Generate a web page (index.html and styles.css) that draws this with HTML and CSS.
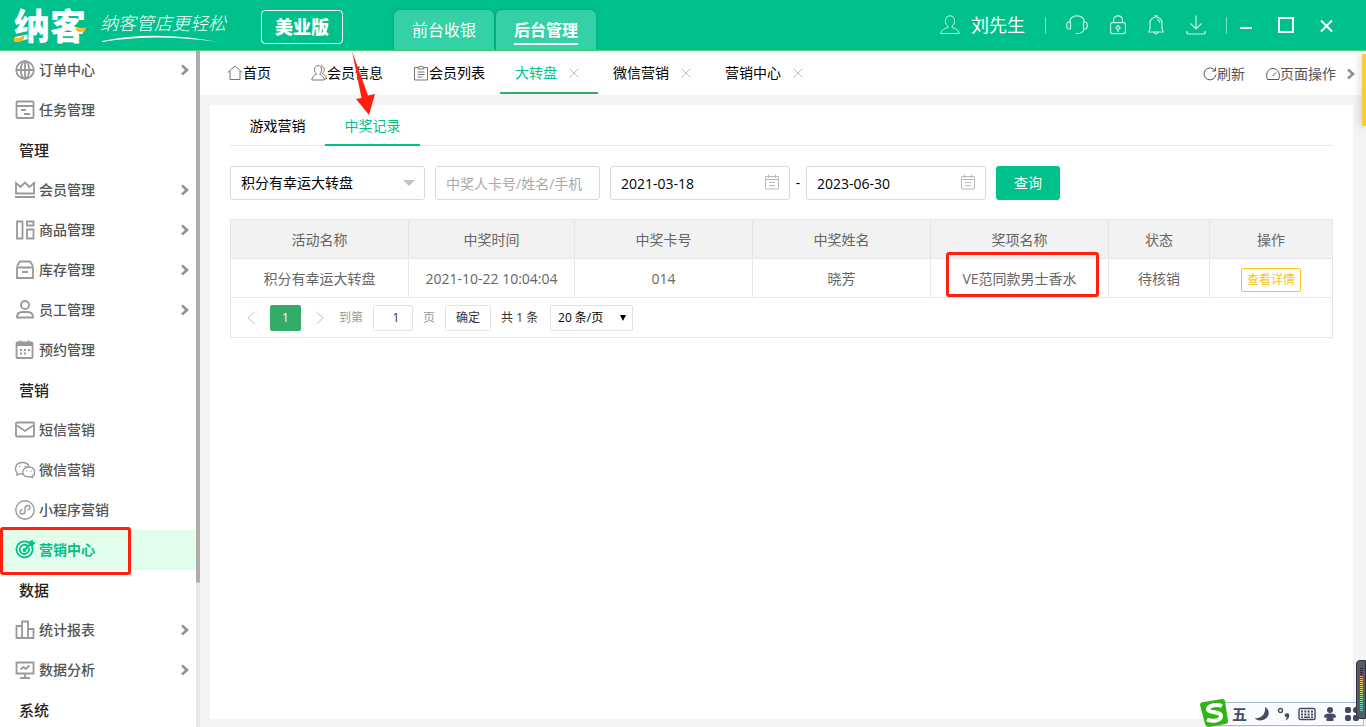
FILE: index.html
```html
<!DOCTYPE html>
<html lang="zh-CN">
<head>
    <meta charset="UTF-8">
    <meta name="viewport" content="width=device-width, initial-scale=1.0">
    <title>纳客 - 大转盘</title>
    <link rel="stylesheet" href="styles.css">
</head>
<body>

    <!-- 图标 -->
    <svg class="sprite" aria-hidden="true">
        <symbol id="i-right" viewBox="0 0 10 12"><path d="M2 1.500 7 6 2 10.500" stroke-width="2.600"/></symbol>
        <symbol id="i-close" viewBox="0 0 14 14"><path d="M2.500 2.500l9 9M11.500 2.500l-9 9"/></symbol>
        <symbol id="i-date" viewBox="0 0 16 16"><path d="M1.500 2.500h13v12.500h-13zM1.500 5.500h13M4.500 .5v3.500M11.500 .5v3.500M5 8.500h6M5 11.500h6"/></symbol>
    </svg>

    <header class="header">
        <div class="logo">纳客
            <svg class="logo-mark" viewBox="0 0 72 32"><path d="M0 26c4 1 7-1 10-3l0 4c-3 3-6 3-10 3zM62 15c3 2 6 2 10 0l-1 4c-4 2-7 1-9-1z"/></svg>
        </div>
        <div class="slogan">
            <span>纳客管店更轻松</span>
            <svg viewBox="0 0 120 8"><path d="M2 6Q55-5 118 7Q55-2 2 7z"/></svg>
        </div>
        <button type="button" class="edition">美业版</button>
        <nav class="modes">
            <a href="#">前台收银</a>
            <a href="#" class="on"><span>后台管理</span></a>
        </nav>
        <div class="header-right">
            <a href="#" class="user">
                <svg width="20" height="20" viewBox="0 0 20 20"><path d="M10 .8c-3 0-4.600 2.200-4.600 5 0 2.400 1 4.400 2.600 5.400v1.300c-3.500.8-6.800 2.500-7.300 6h18.600c-.5-3.500-3.800-5.200-7.300-6v-1.300c1.600-1 2.600-3 2.600-5.400 0-2.800-1.600-5-4.600-5z"/></svg>
                刘先生
            </a>
            <i class="line"></i>
            <div class="tools">
                <button type="button" aria-label="客服"><svg width="22" height="20" viewBox="0 0 22 20"><path d="M3.500 7C4 3 7 .8 11 .8S18 3 18.500 7M4.500 7v7H3C1.500 14 .7 12.500.7 10.500S1.500 7 3 7zM17.500 7v7H19c1.500 0 2.300-1.500 2.300-3.500S20.500 7 19 7zM18 14c-.5 2.500-2.500 4.300-5.500 4.500H9.500"/></svg></button>
                <button type="button" aria-label="锁屏"><svg width="16" height="20" viewBox="0 0 16 20"><path d="M3.500 7.500V5.500C3.500 2.500 5.500.8 8 .8s4.500 1.700 4.500 4.700V7.500M2.500 7.700h11q2 0 2 2v7q0 2-2 2h-11q-2 0-2-2v-7q0-2 2-2zM8 10.500l2.200 2.200L8 15l-2.200-2.300zM8 15v2"/></svg></button>
                <button type="button" aria-label="通知"><svg width="16" height="20" viewBox="0 0 16 20"><path d="M8 2C4.500 2 2 4.800 2 8v5.500L.8 17h14.400L14 13.500V8c0-3.200-2.500-6-6-6zM7 2V.8h2V2M6 17.200c.5 2.200 3.500 2.200 4 0M9 4.500c1.800.4 2.700 1.800 2.800 3.500"/></svg></button>
                <button type="button" aria-label="下载"><svg width="20" height="20" viewBox="0 0 20 20"><path d="M10 .5V14M4.500 8.500 10 14l5.500-5.500M.8 16v1q0 2 2 2h14.400q2 0 2-2v-1"/></svg></button>
            </div>
            <i class="line"></i>
            <div class="window">
                <button type="button" aria-label="最小化"><svg width="12" height="16" viewBox="0 0 12 16"><path d="M0 11h12"/></svg></button>
                <button type="button" aria-label="最大化"><svg width="16" height="16" viewBox="0 0 16 16"><path d="M1 1h14v14H1z"/></svg></button>
                <button type="button" aria-label="关闭"><svg width="13" height="16" viewBox="0 0 13 16"><path d="M1 3.500l11 11M12 3.500l-11 11"/></svg></button>
            </div>
        </div>
    </header>

    <div class="body">
        <aside class="sidebar">
            <nav class="menu">
                <a href="#"><svg class="icon" viewBox="0 0 20 20"><circle cx="10" cy="10" r="8.800"/><ellipse cx="10" cy="10" rx="4.200" ry="8.800"/><path d="M10 1v18M1 10h18"/></svg>订单中心<svg class="arrow"><use href="#i-right"/></svg></a>
                <a href="#"><svg class="icon" viewBox="0 0 20 20"><rect x="1.500" y="1.500" width="17" height="16.500" rx="1"/><path d="M2 6h16M6 10h5M9 14h6"/></svg>任务管理</a>
                <h3>管理</h3>
                <a href="#"><svg class="icon" viewBox="0 0 20 20"><path d="M1 3v10.500h18V3l-4.500 4L10 2.500 5.500 7zM0 17h20"/></svg>会员管理<svg class="arrow"><use href="#i-right"/></svg></a>
                <a href="#"><svg class="icon" viewBox="0 0 20 20"><path d="M2 1.500h5.500v17H2zM12 1.500h6.500v4H12zM12 9.500h6.500v9H12z"/></svg>商品管理<svg class="arrow"><use href="#i-right"/></svg></a>
                <a href="#"><svg class="icon" viewBox="0 0 20 20"><path d="M2 6 5 1.500h10L18 6M2 7.500V18h16V7.500zM7 12h6"/></svg>库存管理<svg class="arrow"><use href="#i-right"/></svg></a>
                <a href="#"><svg class="icon" viewBox="0 0 20 20"><circle cx="10" cy="5" r="4"/><path d="M2 17.500c0-4 2.500-5.500 5.500-5.500h5c3 0 5.500 1.500 5.500 5.500z"/></svg>员工管理<svg class="arrow"><use href="#i-right"/></svg></a>
                <a href="#"><svg class="icon" viewBox="0 0 20 20"><rect x="1.500" y="2.500" width="16" height="15.500" rx="1"/><path d="M2 4.500h15" stroke-width="3"/><path d="M5.500.5v4M13.500.5v4M5 10h2M9 10h2M13 10h2M5 13.500h2M9 13.500h2"/></svg>预约管理</a>
                <h3>营销</h3>
                <a href="#"><svg class="icon" viewBox="0 0 20 20"><rect x="1" y="2.500" width="18" height="14" rx="1"/><path d="M2 5.500 10 11l8-5.500"/></svg>短信营销</a>
                <a href="#"><svg class="icon thin" viewBox="0 0 20 20"><path d="M8 14c-1.500.2-2.500 0-3.500-.3L2 15v-2.500C-1 9 .5 2.500 7.500 2.500c3.500 0 6 1.700 6.500 4.500M13.700 7c7 0 7 7.500 3.800 9v1.500l-2-.8C5 18.500 6 7 13.700 7zM5 6v1M10 6v1M11.500 10.500v1M16 10.500v1"/></svg>微信营销</a>
                <a href="#"><svg class="icon thin" viewBox="0 0 20 20"><circle cx="10" cy="10" r="9.200"/><path d="M7.500 9.500c-3 .5-3.500 4.500-.5 4.500 2 0 3-1 3-2.500V8.500C10 7 11 5.500 13 5.500c3 0 2.500 4-.5 4.500"/></svg>小程序营销</a>
                <a href="#" class="active"><svg class="icon" viewBox="0 0 20 20"><path d="M15 3.500a8 8 0 1 0 1.800 2.500M12.500 6a4.600 4.600 0 1 0 1.200 1.800M9.500 10 17 2.500M15 5V2.500L17 1v2h2l-1.500 2z"/><circle cx="9.500" cy="10" r="1"/></svg>营销中心</a>
                <h3>数据</h3>
                <a href="#"><svg class="icon" viewBox="0 0 20 20"><path d="M1.500 6h5.500v12H1.500zM7 1.500h6V18H7zM13 9h5.500v9H13z"/></svg>统计报表<svg class="arrow"><use href="#i-right"/></svg></a>
                <a href="#"><svg class="icon" viewBox="0 0 20 20"><path d="M1.500 2.500h17v11h-17zM10 13.500V18M5 18h10M5.500 9.500l3-2.500 2.500 2 3.500-3.500"/></svg>数据分析<svg class="arrow"><use href="#i-right"/></svg></a>
                <h3>系统</h3>
            </nav>
            <div class="scroll"><div class="thumb"></div></div>
            <div class="mark mark-menu"></div>
        </aside>

        <main class="main">
            <div class="tabbar">
                <a href="#" class="home"><svg width="16" height="16" viewBox="0 0 16 16"><path d="M.7 7.500 8 1l7.300 6.500M3 6v8.500h10V6"/></svg>首页</a>
                <a href="#"><svg width="16" height="16" viewBox="0 0 16 16"><path d="M7 .7c-2.300 0-3.500 1.700-3.500 3.800S4.500 8.300 5.500 9C3 10.500.8 12 .8 15h12.500c0-3-2.200-4.500-4.700-6 1-.7 2-2.400 2-4.500S9.500.7 7 .7zM10 1c3.500 0 4.500 5 1.500 7.500 2.500 1.500 4 3 4 5.500h-2"/></svg>会员信息</a>
                <a href="#"><svg width="16" height="16" viewBox="0 0 16 16"><path d="M4.500 2.500h-3v12.500h13V2.500h-3M5 4V2h2q1-2.500 2 0h2v2zM4.500 7h7M4.500 9.500h7M4.500 12h5"/></svg>会员列表</a>
                <a href="#" class="closable current">大转盘<svg class="x"><use href="#i-close"/></svg></a>
                <a href="#" class="closable">微信营销<svg class="x"><use href="#i-close"/></svg></a>
                <a href="#" class="closable">营销中心<svg class="x"><use href="#i-close"/></svg></a>
                <div class="tabbar-right">
                    <button type="button"><svg width="14" height="14" viewBox="0 0 14 14"><path d="M12 3.500A6 6 0 1 0 13 7.500M12.500.5v3.500H9"/></svg>刷新</button>
                    <button type="button"><svg width="14" height="14" viewBox="0 0 14 14"><path d="M1.500 12.500C-1 7 2 1.500 7 1.500s8 5.500 5.500 11zM6.500 9 10 5.500"/></svg>页面操作</button>
                    <button type="button" aria-label="更多"><svg class="arrow"><use href="#i-right"/></svg></button>
                </div>
            </div>

            <section class="card">
                <div class="subtabs">
                    <a href="#">游戏营销</a>
                    <a href="#" class="current">中奖记录</a>
                    <svg class="pointer" viewBox="0 0 27 64"><path d="M2 0 18 44.500 25 43 19 64 6 48 11.500 47z"/></svg>
                </div>

                <form class="search">
                    <div class="select">
                        <select aria-label="活动">
                            <option>积分有幸运大转盘</option>
                        </select>
                        <i class="caret"></i>
                    </div>
                    <input class="keyword" type="text" placeholder="中奖人卡号/姓名/手机" aria-label="中奖人卡号/姓名/手机">
                    <div class="range">
                        <div class="date"><input type="text" value="2021-03-18" aria-label="开始日期"><svg><use href="#i-date"/></svg></div>
                        <span>-</span>
                        <div class="date"><input type="text" value="2023-06-30" aria-label="结束日期"><svg><use href="#i-date"/></svg></div>
                    </div>
                    <button type="button">查询</button>
                </form>

                <div class="list">
                    <table>
                        <thead>
                            <tr>
                                <th class="w-name">活动名称</th>
                                <th class="w-time">中奖时间</th>
                                <th class="w-name">中奖卡号</th>
                                <th class="w-name">中奖姓名</th>
                                <th class="w-name">奖项名称</th>
                                <th class="w-state">状态</th>
                                <th>操作</th>
                            </tr>
                        </thead>
                        <tbody>
                            <tr>
                                <td>积分有幸运大转盘</td>
                                <td>2021-10-22 10:04:04</td>
                                <td>014</td>
                                <td>晓芳</td>
                                <td class="prize">VE范同款男士香水<div class="mark mark-prize"></div></td>
                                <td>待核销</td>
                                <td><button type="button" class="detail">查看详情</button></td>
                            </tr>
                        </tbody>
                    </table>
                    <div class="pager">
                        <button type="button" class="turn" aria-label="上一页"><svg width="8" height="14" viewBox="0 0 8 14"><path d="M7.500 1 1 7l6.500 6"/></svg></button>
                        <button type="button" class="page">1</button>
                        <button type="button" class="turn" aria-label="下一页"><svg width="8" height="14" viewBox="0 0 8 14"><path d="M.5 1 7 7 .5 13"/></svg></button>
                        <label for="goto">到第</label>
                        <input id="goto" type="text" value="1">
                        <span class="gray">页</span>
                        <button type="button" class="ok">确定</button>
                        <span class="total">共 1 条</span>
                        <div class="size">
                            <select aria-label="每页条数">
                                <option>20 条/页</option>
                            </select>
                            <i></i>
                        </div>
                    </div>
                </div>
            </section>
        </main>
    </div>

    <div class="side-note"></div>

    <!-- 输入法 -->
    <div class="ime">
        <span>五</span>
        <svg width="16" height="16" viewBox="0 0 16 16"><path d="M11 1c5 3 5 9 0 12-4 2.500-9 1.500-10-1 6 1 11-4 10-11z"/></svg>
        <svg width="14" height="16" viewBox="0 0 14 16"><circle cx="3.500" cy="4.500" r="2" class="ring"/><path d="M8 8c3-2 5 0 4 3-.5 2-2 3-4 3.500 1.500-1.500 2-2.500 1.500-3.500C8 11 7 9.500 8 8z"/></svg>
        <svg width="18" height="14" viewBox="0 0 18 14"><path class="ring" d="M2.500 1.500h13q1.500 0 1.500 1.500v8q0 1.500-1.500 1.500h-13Q1 12.500 1 11V3q0-1.500 1.500-1.500z"/><path d="M3 3.500h2v2H3zM6.300 3.500h2v2h-2zM9.600 3.500h2v2h-2zM13 3.500h2v2h-2zM3 6.500h2v2H3zM6.300 6.500h2v2h-2zM9.600 6.500h2v2h-2zM13 6.500h2v2h-2zM3 9.500h2V11H3zM6 9.500h6V11H6zM13 9.500h2V11h-2z"/></svg>
        <svg width="14" height="16" viewBox="0 0 14 16"><circle cx="7" cy="4" r="3"/><path d="M1 11c0-3 3-3.500 6-3.500s6 .5 6 3.500l-1.500 1-1-1v4h-7v-4l-1 1z"/></svg>
        <svg width="16" height="14" viewBox="0 0 16 14"><rect x="1" width="6" height="6" rx="2"/><rect x="9" width="6" height="6" rx="3"/><rect x="1" y="8" width="6" height="6" rx="2"/><rect x="9" y="8" width="6" height="6" rx="2"/></svg>
        <svg class="sogou" viewBox="0 0 28 28"><path class="bg" d="M4 3 22 0q3 0 3 2l3 20q0 3-3 3L9 28q-3 0-4-3L0 6q0-3 4-3z"/><path class="s" d="M22 7C17 5 9 6 8 10c-.5 4.500 13 2 13 7 0 5-9 6-14 3.500"/></svg>
    </div>
    <div class="meter"><i></i></div>

</body>
</html>
```

FILE: styles.css
```css
* {
    box-sizing: border-box;
}
body {
    margin: 0;
    height: 100vh;
    display: flex;
    flex-direction: column;
    overflow: hidden;
    position: relative;
    font-family: "Open Sans", "Noto Sans CJK SC", sans-serif;
    font-size: 14px;
    line-height: 20px;
    color: #000;
    background: #f4f4f4;
}
a {
    color: inherit;
    text-decoration: none;
}
button, input, select {
    font: inherit;
    color: inherit;
    margin: 0;
    padding: 0;
    border: 0;
    background: none;
    outline: none;
}
select {
    appearance: none;
}
svg {
    flex: none;
    fill: none;
    stroke: currentColor;
    stroke-width: 1;
}
.sprite {
    position: absolute;
    width: 0;
    height: 0;
}

/* 顶部 */
.header {
    flex: none;
    display: flex;
    align-items: center;
    height: 50px;
    padding: 0 33px 0 14px;
    background: #00c18b;
    box-shadow: 0 1px 0 #4fd675;
    color: #fff;
    position: relative;
    z-index: 2;
}
.logo {
    position: relative;
    width: 72px;
    padding-top: 4px;
    font-size: 36px;
    line-height: 46px;
    font-weight: 900;
    white-space: nowrap;
}
.logo-mark {
    position: absolute;
    left: 0;
    top: 12px;
    width: 72px;
    height: 32px;
    fill: #fcb813;
    stroke: none;
}
.slogan {
    display: flex;
    flex-direction: column;
    width: 128px;
    margin-left: 14px;
    padding-top: 4px;
    font-size: 18px;
    line-height: 24px;
    font-style: italic;
    font-weight: 300;
    white-space: nowrap;
}
.slogan svg {
    width: 120px;
    height: 8px;
    fill: #fff;
    stroke: none;
}
.edition {
    width: 82px;
    height: 34px;
    margin: 4px 0 0 33px;
    border: 1px solid #fff;
    border-radius: 4px;
    font-size: 18px;
    font-weight: 900;
}
.modes {
    display: flex;
    align-self: flex-end;
    gap: 2px;
    margin-left: 51px;
}
.modes a {
    width: 100px;
    height: 40px;
    border-radius: 6px 6px 0 0;
    background: #33d1a5;
    box-shadow: 0 0 3px rgba(0, 100, 70, 0.4);
    font-size: 16px;
    line-height: 40px;
    text-align: center;
}
.modes .on {
    font-weight: bold;
}
.modes span {
    display: inline-block;
    height: 35px;
    border-bottom: 2px solid #fff;
}
.header-right {
    display: flex;
    align-items: center;
    gap: 20px;
    margin-left: auto;
}
.header-right svg {
    display: block;
}
.user {
    display: flex;
    align-items: center;
    gap: 11px;
    font-size: 18px;
}
.user svg, .tools {
    color: #c4f3e4;
}
.line {
    width: 1px;
    height: 17px;
    background: #80e0c5;
}
.tools {
    display: flex;
    gap: 22px;
}
.tools svg {
    stroke-width: 1.2;
}
.window {
    display: flex;
    gap: 26px;
    margin-left: -7px;
}
.window svg {
    stroke-width: 2;
}

.body {
    flex: 1;
    display: flex;
    min-height: 0;
}

/* 左侧菜单 */
.sidebar {
    position: relative;
    flex: none;
    display: flex;
    width: 200px;
    background: #fff;
}
.menu {
    flex: 1;
    overflow: hidden;
}
.menu a {
    display: flex;
    align-items: center;
    gap: 4px;
    height: 40px;
    padding: 0 6px 0 15px;
    font-weight: 500;
    color: #555;
}
.menu h3 {
    margin: 0;
    padding-left: 19px;
    font-size: 15px;
    line-height: 40px;
    font-weight: 500;
    color: #222;
}
.menu .active {
    background: #e3fdeb;
    color: #00c18b;
    font-weight: bold;
}
.icon {
    width: 20px;
    height: 20px;
    color: #999;
    stroke-width: 1.8;
}
.thin {
    stroke-width: 1.4;
}
.active .icon {
    color: #00c18b;
}
.arrow {
    width: 10px;
    height: 12px;
    margin-left: auto;
    color: #8f8f9c;
}
.scroll {
    width: 4px;
    background: #e8e8e8;
}
.thumb {
    height: 533px;
    border-radius: 0 0 2px 2px;
    background: #adadad;
}
.mark {
    position: absolute;
    border: 3px solid #ff2010;
    border-radius: 3px;
}
.mark-menu {
    left: 0;
    top: 477px;
    width: 131px;
    height: 48px;
}

/* 标签栏 */
.main {
    flex: 1;
    display: flex;
    flex-direction: column;
    min-width: 0;
}
.tabbar {
    flex: none;
    display: flex;
    height: 45px;
    padding: 0 10px 0 12px;
    background: #fff;
}
.tabbar a {
    display: flex;
    align-items: center;
    height: 44px;
    padding: 4px 15px 0;
    border-bottom: 2px solid transparent;
}
.tabbar .home {
    margin-right: 10px;
}
.tabbar a svg {
    color: #777;
}
.tabbar .closable {
    gap: 10px;
    padding-right: 17px;
}
.tabbar .closable .x {
    width: 14px;
    height: 14px;
    color: #bbb;
}
.tabbar .current {
    color: #00c18b;
    border-color: #33ab69;
}
.tabbar-right {
    display: flex;
    align-items: center;
    gap: 21px;
    margin-left: auto;
    padding-top: 3px;
    color: #555;
}
.tabbar-right button {
    display: flex;
    align-items: center;
}
.tabbar-right button:last-child {
    margin-left: -11px;
}

.card {
    flex: 1;
    margin: 10px 13px 8px 10px;
    padding: 0 20px;
    background: #fff;
}
.subtabs {
    position: relative;
    display: flex;
    height: 41px;
    border-bottom: 1px solid #e6e6e6;
}
.subtabs a {
    width: 95px;
    height: 41px;
    line-height: 41px;
    text-align: center;
}
.subtabs .current {
    color: #00c18b;
    border-bottom: 2px solid #00c18b;
}
.pointer {
    position: absolute;
    left: 120px;
    top: -54px;
    width: 27px;
    height: 64px;
    z-index: 3;
    fill: #ff2010;
    stroke: none;
}

/* 查询条件 */
.search {
    display: flex;
    gap: 10px;
    margin: 20px 0 19px;
}
.search input, .search select {
    width: 100%;
    height: 34px;
    padding: 0 10px;
    border: 1px solid #d9d9d9;
    border-radius: 3px;
    background: #fff;
}
.select {
    position: relative;
    width: 195px;
}
.caret {
    position: absolute;
    right: 10px;
    top: 14px;
    border: 6px solid transparent;
    border-top-color: #c2c2c2;
    border-bottom: 0;
}
.search .keyword {
    width: 165px;
}
.keyword::placeholder {
    color: #aaa;
}
.range {
    display: flex;
    align-items: center;
}
.range span {
    width: 16px;
    text-align: center;
}
.date {
    position: relative;
    width: 180px;
}
.date svg {
    position: absolute;
    right: 10px;
    top: 8px;
    width: 16px;
    height: 16px;
    color: #bbb;
}
.search button {
    width: 64px;
    height: 34px;
    border-radius: 3px;
    background: #00c18b;
    color: #fff;
}

/* 列表 */
.list {
    border: 1px solid #e6e6e6;
    color: #666;
}
table {
    width: 100%;
    table-layout: fixed;
    border-spacing: 0;
}
th, td {
    height: 39px;
    padding: 2px 0 0;
    border-right: 1px solid #e6e6e6;
    border-bottom: 1px solid #e6e6e6;
    font-weight: normal;
    text-align: center;
}
th:last-child, td:last-child {
    border-right: 0;
}
th {
    background: #f2f2f2;
}
.w-name {
    width: 178px;
}
.w-time {
    width: 166px;
}
.w-state {
    width: 101px;
}
.prize {
    position: relative;
}
.mark-prize {
    left: 15px;
    top: -7px;
    width: 153px;
    height: 45px;
}
.detail {
    display: block;
    width: 60px;
    height: 24px;
    margin: 2px auto 0;
    border: 1px solid #fcc30a;
    border-radius: 2px;
    font-size: 12px;
    line-height: 22px;
    color: #fcc30a;
}
.pager {
    display: flex;
    align-items: center;
    gap: 10px;
    height: 39px;
    padding-left: 11px;
    font-size: 12px;
    color: #333;
}
.pager .turn {
    width: 18px;
    color: #c2c2c2;
}
.turn svg {
    display: block;
    margin: auto;
}
.pager .page {
    width: 31px;
    height: 26px;
    border-radius: 2px;
    background: #33ab69;
    color: #fff;
}
.pager label, .gray {
    color: #999;
}
.total {
    min-width: 39px;
}
.pager input, .pager select, .ok {
    height: 26px;
    border: 1px solid #e2e2e2;
    border-radius: 2px;
}
.pager input {
    width: 40px;
    padding-left: 6px;
    text-align: center;
}
.ok {
    width: 46px;
}
.size {
    position: relative;
}
.size select {
    width: 83px;
    padding-left: 7px;
    color: #000;
}
.size i {
    position: absolute;
    right: 7px;
    top: 10px;
    border: 3px solid transparent;
    border-top: 6px solid #000;
    border-bottom: 0;
}

/* 浮动 */
.side-note {
    position: absolute;
    right: 0;
    top: 54px;
    width: 4px;
    height: 72px;
    background: #f8cc3e;
    box-shadow: 0 0 10px rgba(0, 0, 0, 0.3);
}
.ime {
    position: absolute;
    right: 2px;
    bottom: 1px;
    display: flex;
    align-items: center;
    gap: 7px;
    width: 155px;
    height: 24px;
    padding-left: 22px;
    border: 1px solid #a9bccf;
    background: #f8fbff;
    color: #444a63;
    font-weight: bold;
    font-size: 15px;
}
.ime svg {
    fill: #444a63;
    stroke: none;
}
.ime .ring {
    fill: none;
    stroke: #444a63;
    stroke-width: 1.4;
}
.ime .sogou {
    position: absolute;
    left: -10px;
    top: -4px;
    width: 28px;
    height: 28px;
}
.sogou .bg {
    fill: #2fb514;
}
.sogou .s {
    fill: none;
    stroke: #fff;
    stroke-width: 4;
}
.meter {
    position: absolute;
    right: 0;
    bottom: 8px;
    width: 10px;
    height: 59px;
    padding: 7px 2px 7px 3px;
    border: 1px solid #33343d;
    border-radius: 4px 0 0 4px;
    background: #575a69;
}
.meter i {
    display: block;
    height: 100%;
    background: repeating-linear-gradient(transparent 0 1px, #575a69 1px 2px), linear-gradient(#2b2d36 0 18%, #f0a070 20%, #e8d868 40%, #a5dc88 65%, #5ed0d0);
}
```
